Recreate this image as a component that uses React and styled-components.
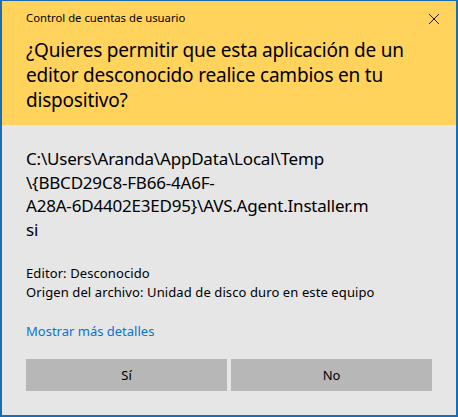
import React from 'react';
import styled, { createGlobalStyle } from 'styled-components';

const GlobalStyle = createGlobalStyle`
  html, body {
    margin: 0;
    padding: 0;
    background: #e6e6e6;
  }
  * { box-sizing: border-box; }
`;

const Window = styled.div`
  width: 458px;
  height: 417px;
  display: flex;
  flex-direction: column;
  border: 2px solid #1b6cb0;
  border-top-width: 1px;
  background: #e6e6e6;
  font-family: "Noto Sans", "Open Sans", sans-serif;
  color: #000;
`;

const Header = styled.div`
  background: #ffd35c;
  height: 124px;
  padding: 9px 0 0 24px;
  position: relative;
`;

const Caption = styled.div`
  font-size: 11.3px;
  line-height: 16px;
`;

const CloseButton = styled.button`
  position: absolute;
  top: 6px;
  right: 10px;
  width: 24px;
  height: 24px;
  border: 0;
  padding: 0;
  background: transparent;
  display: flex;
  align-items: center;
  justify-content: center;
`;

const Question = styled.div`
  margin-top: 12px;
  font-size: 19px;
  line-height: 25px;
  letter-spacing: -0.2px;
`;

const Body = styled.div`
  flex: 1;
  padding: 22px 24px 0 24px;
  display: flex;
  flex-direction: column;
`;

const Path = styled.div`
  font-size: 17px;
  line-height: 23.5px;
  letter-spacing: -0.2px;
`;

const Line = styled.span`
  display: block;
`;

const Details = styled.div`
  margin-top: 23px;
  font-size: 13px;
  line-height: 19px;
  letter-spacing: 0.1px;
`;

const Link = styled.a`
  margin-top: 19px;
  font-size: 13px;
  line-height: 20px;
  color: #0a72d0;
  text-decoration: none;
  cursor: pointer;
`;

const Buttons = styled.div`
  margin-top: 18px;
  display: flex;
  gap: 4px;
`;

const Button = styled.button`
  width: 201px;
  height: 32px;
  border: 0;
  background: #b7b7b7;
  font-family: inherit;
  font-size: 13px;
  color: #000;
`;

function CloseIcon() {
  return (
    <svg width="12" height="12" viewBox="0 0 12 12">
      <path d="M1 1 L11 11 M11 1 L1 11" stroke="#1a1a1a" strokeWidth="1" fill="none" />
    </svg>
  );
}

export default function App() {
  return (
    <>
      <GlobalStyle />
      <Window>
        <Header>
          <Caption>Control de cuentas de usuario</Caption>
          <CloseButton aria-label="Cerrar"><CloseIcon /></CloseButton>
          <Question>
            ¿Quieres permitir que esta aplicación de un editor desconocido realice cambios en tu dispositivo?
          </Question>
        </Header>
        <Body>
          <Path>
            <Line>C:\Users\Aranda\AppData\Local\Temp</Line>
            <Line>{'\\{BBCD29C8-FB66-4A6F-'}</Line>
            <Line>{'A28A-6D4402E3ED95}\\AVS.Agent.Installer.m'}</Line>
            <Line>si</Line>
          </Path>
          <Details>
            <Line>Editor: Desconocido</Line>
            <Line>Origen del archivo: Unidad de disco duro en este equipo</Line>
          </Details>
          <Link>Mostrar más detalles</Link>
          <Buttons>
            <Button>Sí</Button>
            <Button>No</Button>
          </Buttons>
        </Body>
      </Window>
    </>
  );
}
